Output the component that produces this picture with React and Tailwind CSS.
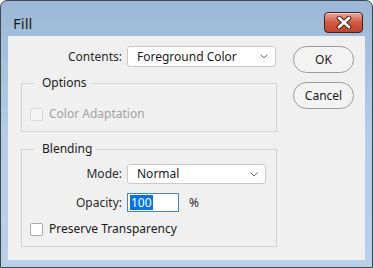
import React from 'react';

/**
 * Photoshop "Fill" dialog in a Windows 7 style frame
 */
function Chevron() {
  return (
    <svg width="8" height="5" viewBox="0 0 8 5" className="text-[#707070]">
      <polyline points="0.5,0.5 4,4 7.5,0.5" fill="none" stroke="currentColor" strokeWidth="1" />
    </svg>
  );
}

function Select({ value, className }) {
  return (
    <div
      className={`flex items-center justify-between bg-white border border-[#c9c9c9] rounded-[3px] pl-[9px] pr-[7px] text-[#1a1a1a] ${className}`}
    >
      <span>{value}</span>
      <Chevron />
    </div>
  );
}

function Checkbox({ label, disabled }) {
  return (
    <div className="flex items-center h-[16px]">
      <span
        className={`w-[13px] h-[13px] rounded-[2px] border ${
          disabled ? 'border-[#dadada] bg-[#f5f5f5]' : 'border-[#a9a9a9] bg-white'
        }`}
      />
      <span className={`ml-[6px] ${disabled ? 'text-[#a3a3a3]' : 'text-[#1a1a1a]'}`}>{label}</span>
    </div>
  );
}

function Group({ title, children, className }) {
  return (
    <fieldset className={`border border-[#d3d3d3] m-0 ${className}`}>
      <legend className="ml-[12px] pl-[8px] pr-[4px] leading-[16px] text-[#1a1a1a]">{title}</legend>
      {children}
    </fieldset>
  );
}

function PillButton({ children }) {
  return (
    <button className="w-[61px] h-[27px] rounded-full border border-[#9a9a9a] bg-[#f3f3f3] text-[#1a1a1a] flex items-center justify-center">
      {children}
    </button>
  );
}

export default function App() {
  return (
    <div className="w-[373px] h-[268px] bg-white">
      <div
        className="w-full h-full flex flex-col border border-[#3d4752] rounded-t-[7px] bg-gradient-to-b from-[#9cb8d6] via-[#b5cde6] to-[#b8d0e9] px-[7px] pb-[7px] text-[12px] leading-[16px]"
        style={{ fontFamily: '"Noto Sans", "Open Sans", sans-serif' }}
      >
        {/* title bar */}
        <div className="h-[35px] flex items-start">
          <span className="mt-[12px] ml-[5px] text-[15px] leading-[20px] text-[#1e1e1e]">Fill</span>
          <div className="ml-auto mt-[11px] mr-[2px] w-[39px] h-[21px] rounded-[4px] border border-[#4a2018] bg-gradient-to-b from-[#e7a79a] via-[#cf5a44] to-[#c2442c] flex items-center justify-center shadow-[inset_0_1px_0_rgba(255,255,255,0.45)]">
            <svg width="16" height="13" viewBox="0 0 16 13">
              <path d="M3 2 L13 11 M13 2 L3 11" stroke="#3b1a14" strokeWidth="4.6" strokeLinecap="round" />
              <path d="M3 2 L13 11 M13 2 L3 11" stroke="#ffffff" strokeWidth="2.8" strokeLinecap="round" />
            </svg>
          </div>
        </div>

        {/* client area */}
        <div className="flex-1 bg-[#f0f0f0] flex pl-[13px] pt-[10px]">
          <div className="w-[256px] flex flex-col">
            <div className="flex items-center h-[21px]">
              <span className="w-[101px] text-right text-[#2a2a2a]">Contents:</span>
              <Select value="Foreground Color" className="ml-[5px] w-[149px] h-[21px]" />
            </div>

            <Group title="Options" className="mt-[8px] h-[57px]">
              <div className="pl-[8px] mt-[15px]">
                <Checkbox label="Color Adaptation" disabled />
              </div>
            </Group>

            <Group title="Blending" className="mt-[9px] h-[106px]">
              <div className="flex items-center mt-[7px] h-[20px]">
                <span className="w-[100px] text-right text-[#2a2a2a]">Mode:</span>
                <Select value="Normal" className="ml-[5px] w-[139px] h-[20px]" />
              </div>
              <div className="flex items-center mt-[9px] h-[19px]">
                <span className="w-[100px] text-right text-[#2a2a2a]">Opacity:</span>
                <div className="ml-[5px] w-[52px] h-[19px] border border-[#4a86bb] bg-white flex items-center pl-[2px]">
                  <span className="bg-[#0a74da] text-white px-[1px] leading-[15px]">100</span>
                </div>
                <span className="ml-[10px] text-[#2a2a2a]">%</span>
              </div>
              <div className="pl-[8px] mt-[9px]">
                <Checkbox label="Preserve Transparency" />
              </div>
            </Group>
          </div>

          <div className="ml-[16px] flex flex-col gap-[9px]">
            <PillButton>OK</PillButton>
            <PillButton>Cancel</PillButton>
          </div>
        </div>
      </div>
    </div>
  );
}
